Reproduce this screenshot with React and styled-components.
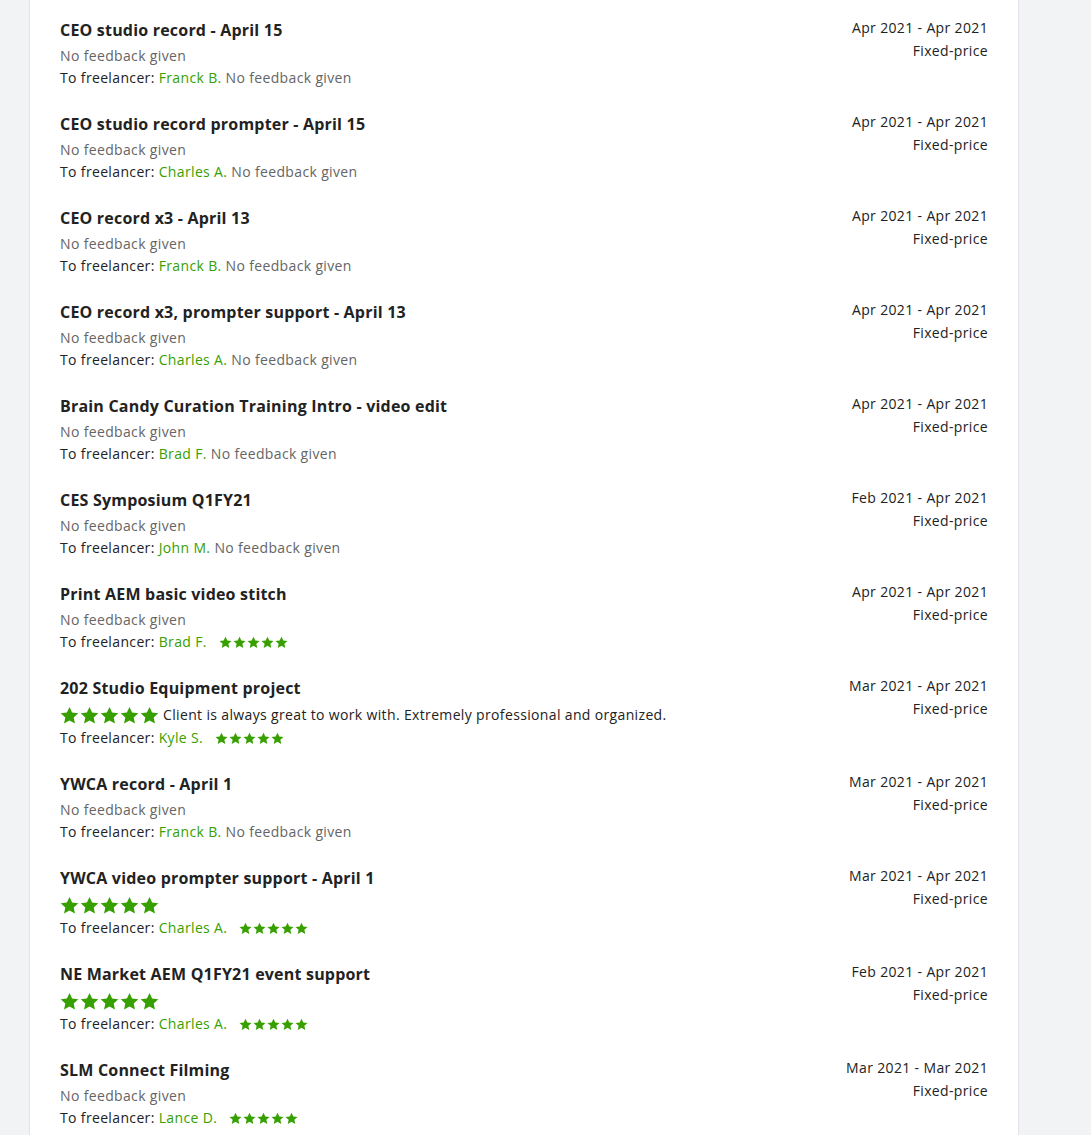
import React from "react";
import styled, { createGlobalStyle } from "styled-components";

const Global = createGlobalStyle`
  html, body { margin: 0; padding: 0; background: #f2f3f5; }
  body { font-family: "Open Sans", "Liberation Sans", sans-serif; -webkit-font-smoothing: antialiased; }
`;

const Page = styled.div`
  min-height: 1135px;
  padding-left: 29px;
  background: #f2f3f5;
`;

const Card = styled.div`
  box-sizing: border-box;
  width: 990px;
  min-height: 1135px;
  background: #fff;
  border-left: 1px solid #e2e3e6;
  border-right: 1px solid #e2e3e6;
  padding: 9px 30px 0 30px;
`;

const Row = styled.div`
  display: flex;
  justify-content: space-between;
  align-items: flex-start;
  padding: 9px 0 14px;
`;

const Left = styled.div`
  display: flex;
  flex-direction: column;
`;

const Title = styled.div`
  font-size: 16px;
  font-weight: 700;
  line-height: 24px;
  letter-spacing: 0.2px;
  color: #222;
  margin-bottom: 3px;
`;

const Line = styled.div`
  display: flex;
  align-items: center;
  font-size: 14px;
  letter-spacing: 0.35px;
  line-height: ${(p) => (p.$tall ? "24px" : "22px")};
  height: ${(p) => (p.$tall ? "24px" : "22px")};
  color: ${(p) => (p.$muted ? "#656565" : "#222")};
  white-space: pre;
`;

const Name = styled.span`
  color: #37a000;
`;

const Muted = styled.span`
  color: #656565;
`;

const Right = styled.div`
  display: flex;
  flex-direction: column;
  align-items: flex-end;
  margin-top: -2px;
  font-size: 14px;
  letter-spacing: 0.35px;
  line-height: 23px;
  color: #222;
`;

const Stars = styled.span`
  display: inline-flex;
  align-items: center;
  gap: 1px;
  margin-left: ${(p) => (p.$big ? "0" : "12px")};
  margin-right: ${(p) => (p.$big ? "4px" : "0")};
`;

const StarSvg = styled.svg`
  display: block;
  width: ${(p) => p.$size}px;
  height: ${(p) => p.$size}px;
  fill: #37a000;
`;

function Star({ size }) {
  return (
    <StarSvg $size={size} viewBox="0 0 24 24">
      <path d="M12 1.2l3.3 7.1 7.8.8-5.8 5.3 1.6 7.7L12 18.2l-6.9 3.9 1.6-7.7L.9 9.1l7.8-.8z" />
    </StarSvg>
  );
}

function StarRow({ big }) {
  const size = big ? 19 : 13;
  return (
    <Stars $big={big}>
      {[0, 1, 2, 3, 4].map((i) => (
        <Star key={i} size={size} />
      ))}
    </Stars>
  );
}

const rows = [
  { title: "CEO studio record - April 15", date: "Apr 2021 - Apr 2021", name: "Franck B." },
  { title: "CEO studio record prompter - April 15", date: "Apr 2021 - Apr 2021", name: "Charles A." },
  { title: "CEO record x3 - April 13", date: "Apr 2021 - Apr 2021", name: "Franck B." },
  { title: "CEO record x3, prompter support - April 13", date: "Apr 2021 - Apr 2021", name: "Charles A." },
  { title: "Brain Candy Curation Training Intro - video edit", date: "Apr 2021 - Apr 2021", name: "Brad F." },
  { title: "CES Symposium Q1FY21", date: "Feb 2021 - Apr 2021", name: "John M." },
  { title: "Print AEM basic video stitch", date: "Apr 2021 - Apr 2021", name: "Brad F.", fStars: true },
  {
    title: "202 Studio Equipment project",
    date: "Mar 2021 - Apr 2021",
    name: "Kyle S.",
    cStars: true,
    comment: "Client is always great to work with. Extremely professional and organized.",
    fStars: true,
  },
  { title: "YWCA record - April 1", date: "Mar 2021 - Apr 2021", name: "Franck B." },
  { title: "YWCA video prompter support - April 1", date: "Mar 2021 - Apr 2021", name: "Charles A.", cStars: true, fStars: true },
  { title: "NE Market AEM Q1FY21 event support", date: "Feb 2021 - Apr 2021", name: "Charles A.", cStars: true, fStars: true },
  { title: "SLM Connect Filming", date: "Mar 2021 - Mar 2021", name: "Lance D.", fStars: true },
];

export default function App() {
  return (
    <>
      <Global />
      <Page>
        <Card>
          {rows.map((r, i) => (
            <Row key={i}>
              <Left>
                <Title>{r.title}</Title>
                {r.cStars ? (
                  <Line $tall>
                    <StarRow big />
                    {r.comment ? <span>{r.comment}</span> : null}
                  </Line>
                ) : (
                  <Line $muted>No feedback given</Line>
                )}
                <Line>
                  To freelancer: <Name>{r.name}</Name>
                  {r.fStars ? <StarRow /> : <Muted> No feedback given</Muted>}
                </Line>
              </Left>
              <Right>
                <span>{r.date}</span>
                <span>Fixed-price</span>
              </Right>
            </Row>
          ))}
        </Card>
      </Page>
    </>
  );
}
